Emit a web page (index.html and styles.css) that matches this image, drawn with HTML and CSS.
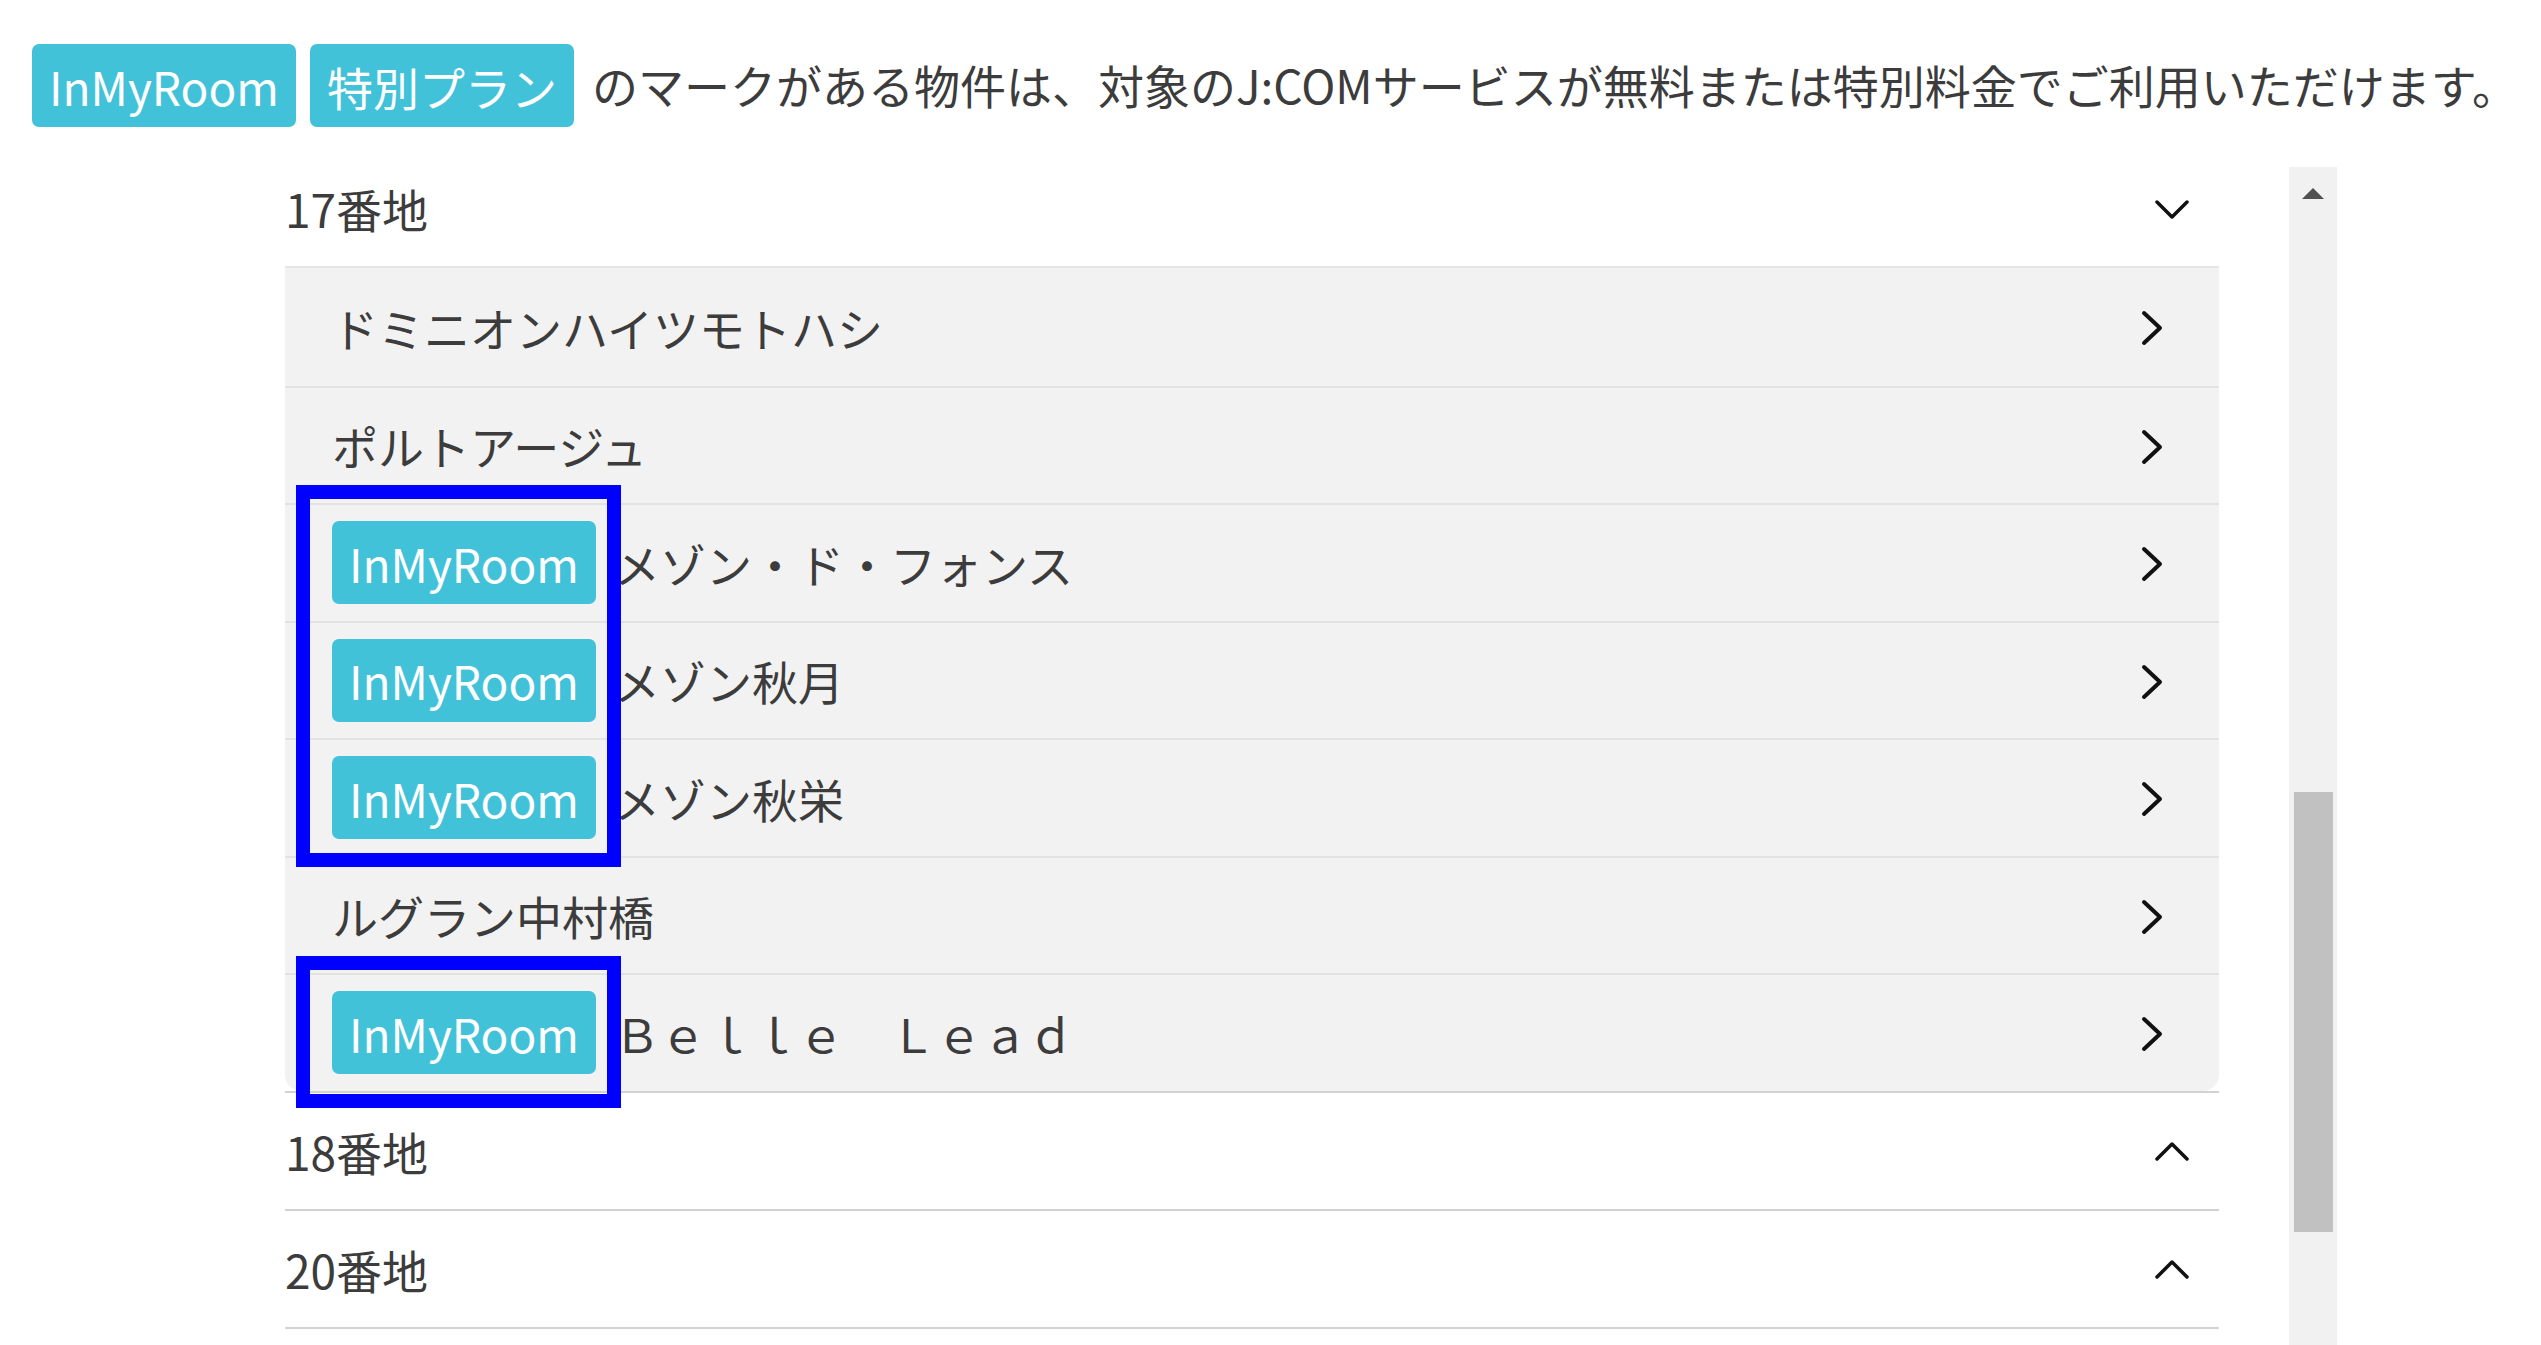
FILE: index.html
```html
<!DOCTYPE html>
<html lang="ja">
<head>
<meta charset="utf-8">
<title>InMyRoom</title>
<link rel="stylesheet" href="styles.css">
</head>
<body>
<div class="legend">
  <span class="badge">InMyRoom</span>
  <span class="badge">特別プラン</span>
  <span class="legend-text">のマークがある物件は、対象のJ:COMサービスが無料または特別料金でご利用いただけます。</span>
</div>
<div class="viewport">
  <div class="list">
    <div class="group">
      <div class="group-head head-open">
        <span>17番地</span>
        <svg class="chev-v" viewBox="0 0 34 20"><polyline points="2,2 17,17 32,2"/></svg>
      </div>
      <ul class="items">
        <li class="item"><span class="name">ドミニオンハイツモトハシ</span><svg class="chev-r" viewBox="0 0 22 36"><polyline points="3,3 19,18 3,33"/></svg></li>
        <li class="item"><span class="name">ポルトアージュ</span><svg class="chev-r" viewBox="0 0 22 36"><polyline points="3,3 19,18 3,33"/></svg></li>
        <li class="item"><span class="badge badge-row">InMyRoom</span><span class="name">メゾン・ド・フォンス</span><svg class="chev-r" viewBox="0 0 22 36"><polyline points="3,3 19,18 3,33"/></svg></li>
        <li class="item"><span class="badge badge-row">InMyRoom</span><span class="name">メゾン秋月</span><svg class="chev-r" viewBox="0 0 22 36"><polyline points="3,3 19,18 3,33"/></svg></li>
        <li class="item"><span class="badge badge-row">InMyRoom</span><span class="name">メゾン秋栄</span><svg class="chev-r" viewBox="0 0 22 36"><polyline points="3,3 19,18 3,33"/></svg></li>
        <li class="item"><span class="name">ルグラン中村橋</span><svg class="chev-r" viewBox="0 0 22 36"><polyline points="3,3 19,18 3,33"/></svg></li>
        <li class="item"><span class="badge badge-row">InMyRoom</span><span class="name">Ｂｅｌｌｅ　Ｌｅａｄ</span><svg class="chev-r" viewBox="0 0 22 36"><polyline points="3,3 19,18 3,33"/></svg></li>
      </ul>
      <div class="mark mark-1"></div>
      <div class="mark mark-2"></div>
    </div>
    <div class="group">
      <div class="group-head">
        <span>18番地</span>
        <svg class="chev-v" viewBox="0 0 34 20"><polyline points="2,18 17,3 32,18"/></svg>
      </div>
    </div>
    <div class="group">
      <div class="group-head">
        <span>20番地</span>
        <svg class="chev-v" viewBox="0 0 34 20"><polyline points="2,18 17,3 32,18"/></svg>
      </div>
    </div>
  </div>
  <div class="scrollbar">
    <div class="sb-arrow"></div>
    <div class="sb-thumb"></div>
  </div>
</div>
</body>
</html>
```
FILE: styles.css
```css
html, body {
  margin: 0;
  padding: 0;
  background: #ffffff;
  overflow: hidden;
}
body {
  font-family: "Noto Sans CJK JP", "Noto Sans", sans-serif;
  color: #3c3c3c;
  font-size: 46px;
  height: 1345px;
}
.legend {
  display: flex;
  align-items: center;
  gap: 14px;
  padding: 44px 0 0 32px;
  white-space: nowrap;
}
.badge {
  display: inline-flex;
  align-items: center;
  height: 83px;
  padding: 0 17px;
  background: #42c2d9;
  color: #ffffff;
  border-radius: 7px;
  font-size: 46px;
  line-height: 1;
  box-sizing: border-box;
  flex: none;
}
.legend-text {
  margin-left: 4px;
  line-height: 1;
  position: relative;
  top: -2px;
}
.viewport {
  display: flex;
  margin: 40px 0 0 285px;
  width: 2052px;
  height: 1178px;
  overflow: hidden;
}
.list {
  width: 1934px;
  margin-top: -17px;
  flex: none;
}
.group {
  position: relative;
  border-bottom: 2px solid #d2d2d2;
}
.group-head {
  display: flex;
  align-items: center;
  justify-content: space-between;
  height: 116px;
  padding-right: 30px;
  line-height: 1;
}
.head-open {
  height: 118px;
  border-bottom: 2px solid #e6e6e6;
  box-sizing: border-box;
}
.head-open .chev-v {
  margin-top: 4px;
}
.chev-v {
  width: 34px;
  height: 20px;
  fill: none;
  stroke: #111111;
  stroke-width: 3.5;
  stroke-linecap: round;
  stroke-linejoin: round;
}
.items {
  list-style: none;
  margin: 0;
  padding: 0;
  background: #f2f2f2;
  border-radius: 0 0 16px 16px;
}
.item {
  display: flex;
  align-items: center;
  height: 117.5px;
  box-sizing: border-box;
  padding: 0 56px 0 47px;
  border-top: 2px solid #e2e2e2;
  line-height: 1;
}
.item:first-child {
  border-top: none;
}
.badge-row {
  margin-right: 18px;
}
.name {
  flex: 1;
}
.chev-r {
  width: 22px;
  height: 36px;
  margin-top: 3px;
  fill: none;
  stroke: #111111;
  stroke-width: 4;
  stroke-linecap: round;
  stroke-linejoin: round;
}
.mark {
  position: absolute;
  left: 11px;
  width: 325px;
  border: 14px solid #0000ff;
  box-sizing: border-box;
  pointer-events: none;
}
.mark-1 {
  top: 335px;
  height: 382px;
}
.mark-2 {
  top: 806px;
  height: 152px;
}
.scrollbar {
  margin-left: 70px;
  width: 48px;
  height: 100%;
  background: #f1f1f1;
  display: flex;
  flex-direction: column;
  align-items: center;
  flex: none;
}
.sb-arrow {
  margin-top: 21px;
  width: 0;
  height: 0;
  border-left: 11px solid transparent;
  border-right: 11px solid transparent;
  border-bottom: 11px solid #505050;
}
.sb-thumb {
  margin-top: 593px;
  width: 39px;
  height: 440px;
  background: #c1c1c1;
}
```
